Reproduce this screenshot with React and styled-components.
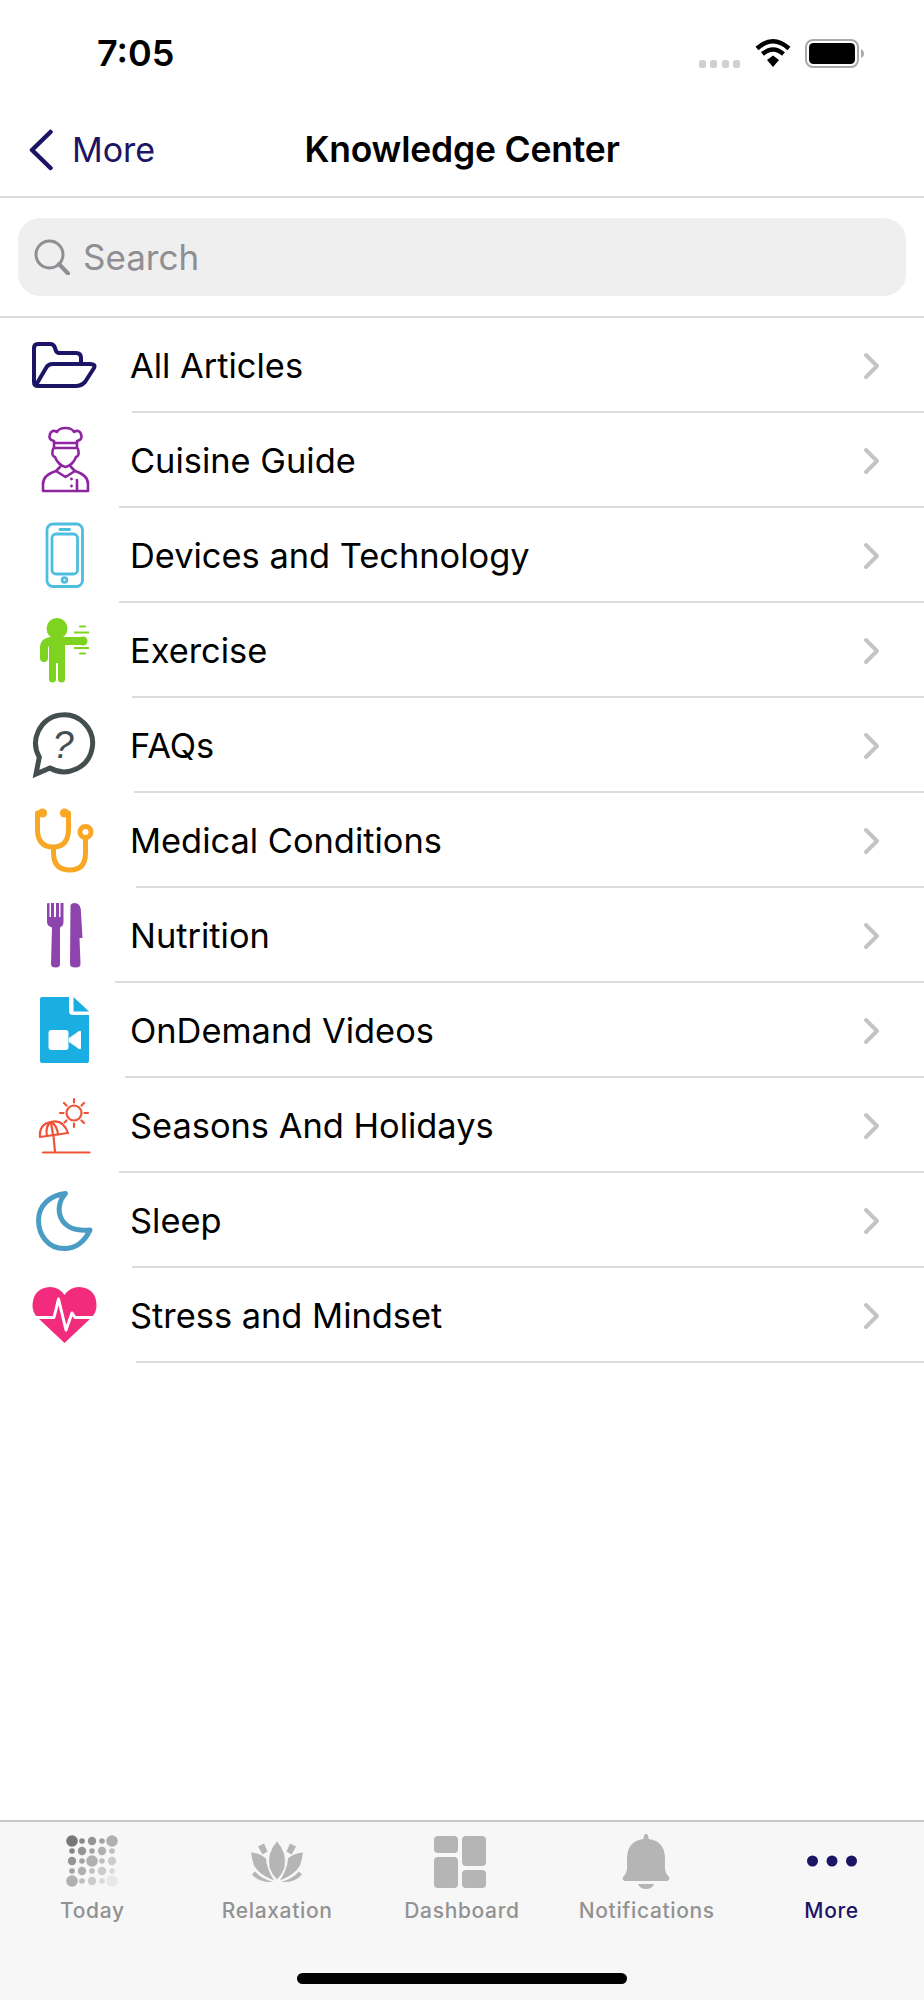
import React from "react";
import styled, { createGlobalStyle } from "styled-components";

const Global = createGlobalStyle`
  html, body { margin: 0; padding: 0; background: #fff; }
  * { box-sizing: border-box; }
  body { font-family: Inter, "Liberation Sans", sans-serif; -webkit-font-smoothing: antialiased; }
`;

const NAVY = "#1c1464";

const Page = styled.div`
  width: 924px;
  height: 2000px;
  display: flex;
  flex-direction: column;
  background: #fff;
`;

const StatusBar = styled.div`
  height: 117px;
  flex: none;
  display: flex;
  justify-content: space-between;
  align-items: flex-start;
  padding: 39px 58px 0 97px;
`;

const Clock = styled.div`
  font-size: 36px;
  line-height: 29px;
  font-weight: 600;
  color: #000;
  letter-spacing: 0;
`;

const StatusIcons = styled.div`
  display: flex;
  align-items: flex-start;
  margin-top: -1px;
`;

const NavBar = styled.div`
  height: 81px;
  flex: none;
  display: grid;
  grid-template-columns: 1fr auto 1fr;
  align-items: center;
  border-bottom: 2px solid #dedede;
  padding-bottom: 14px;
`;

const Back = styled.div`
  display: flex;
  align-items: center;
  gap: 19px;
  padding-left: 28px;
  color: ${NAVY};
  font-size: 34px;
`;

const Title = styled.div`
  font-size: 35.5px;
  font-weight: 600;
  color: #000;
  letter-spacing: -0.2px;
`;

const SearchWrap = styled.div`
  height: 120px;
  flex: none;
  padding: 20px 18px 0;
  border-bottom: 2px solid #dedede;
`;

const SearchBox = styled.div`
  height: 78px;
  background: #efefef;
  border-radius: 22px;
  display: flex;
  align-items: center;
  gap: 13px;
  padding: 0 0 0 16px;
  color: #8e8e93;
  font-size: 35px;
`;

const List = styled.div`
  flex: 1;
  display: flex;
  flex-direction: column;
`;

const Row = styled.div`
  position: relative;
  height: 95px;
  flex: none;
  display: flex;
  align-items: center;
  &::after {
    content: "";
    position: absolute;
    left: ${(p) => p.$sep}px;
    right: 0;
    bottom: 0;
    height: 2px;
    background: #dcdcdc;
  }
`;

const IconCell = styled.svg`
  width: 104px;
  height: 95px;
  flex: none;
  margin-left: 26px;
`;

const RowLabel = styled.div`
  flex: 1;
  font-size: 34.4px;
  color: #000;
`;

const Chevron = styled.svg`
  width: 20px;
  height: 30px;
  margin-right: 42px;
  flex: none;
`;

const TabBar = styled.div`
  height: 180px;
  flex: none;
  background: #f7f7f7;
  border-top: 2px solid #c8c8c8;
  display: flex;
  flex-direction: column;
`;

const Tabs = styled.div`
  display: grid;
  grid-template-columns: repeat(5, 1fr);
`;

const Tab = styled.div`
  display: flex;
  flex-direction: column;
  align-items: center;
  color: ${(p) => (p.$active ? NAVY : "#929292")};
  font-size: 21px;
  line-height: 26px;
  letter-spacing: 0.65px;
  font-weight: 450;
`;

const TabIcon = styled.svg`
  width: 60px;
  height: 60px;
  margin-top: 10px;
  margin-bottom: 6px;
  flex: none;
`;

const HomeIndicator = styled.div`
  width: 330px;
  height: 11px;
  border-radius: 6px;
  background: #000;
  margin: 49px auto 0;
`;

const Icon = ({ children }) => <IconCell viewBox="26 0 104 95">{children}</IconCell>;

const Folder = () => (
  <Icon>
    <path
      d="M34 64V30Q34 26 38 26H50Q54 26 55 30L56 33Q57 35 60 35H76Q81 35 81 40V46M36 67L46 50Q48 46 53 46H90Q96 46 94 50L85 64Q81 68 76 68H38Q34 68 34 64"
      fill="none" stroke={NAVY} strokeWidth="4" strokeLinejoin="round" strokeLinecap="round" />
  </Icon>
);

const Chef = () => (
  <Icon>
    <g fill="none" stroke="#8e24a0" strokeWidth="2.6" strokeLinejoin="round" strokeLinecap="round">
      <path d="M54 35V28Q48 27 50 21Q52 16 57 19Q59 15 65.5 15Q72 15 74 19Q79 16 81 21Q83 27 77 28V35Z" />
      <path d="M55 30H76" />
      <path d="M53 36Q51 43 55 44Q58 52 65.5 54Q73 52 76 44Q80 43 78 36" />
      <path d="M43 78V71Q43 62 56 58L60 54M43 78H88V71Q88 62 75 58L71 54M56 58L65.5 64L75 58" />
      <path d="M77 67V78" />
    </g>
    <circle cx="71.5" cy="66" r="1.4" fill="#8e24a0" />
    <circle cx="71.5" cy="73" r="1.4" fill="#8e24a0" />
  </Icon>
);

const Phone = () => (
  <Icon>
    <g fill="none" stroke="#4dbde0" strokeWidth="2.8">
      <rect x="47" y="16" width="35.5" height="62.5" rx="6" />
      <rect x="52" y="26" width="25.5" height="40" rx="4" />
      <path d="M60 21.5H69.5" strokeLinecap="round" />
      <circle cx="64.5" cy="72" r="2.4" />
    </g>
  </Icon>
);

const Exercise = () => (
  <Icon>
    <circle cx="57" cy="25.5" r="10.5" fill="#7ed321" />
    <g fill="none" stroke="#7ed321" strokeLinecap="round" strokeLinejoin="round">
      <path d="M44 55V45Q44 38.500 52 38H83" strokeWidth="8" />
      <path d="M52.500 40V76M61.500 40V76" strokeWidth="7" />
      <path d="M57 40V60" strokeWidth="10" strokeLinecap="butt" />
      <path d="M74 29.5H89M74 45H89" strokeWidth="2" strokeLinecap="butt" />
      <path d="M80 23.5H85M80 50.500H85" strokeWidth="2" />
    </g>
    <circle cx="83" cy="38" r="4.500" fill="#7ed321" />
  </Icon>
);

const Faq = () => (
  <Icon>
    <path d="M39.300 59.250L36 76L50 70A28.500 28.500 0 1 0 39.300 59.250Z" fill="none" stroke="#434f4f" strokeWidth="5" strokeLinejoin="miter" />
    <text x="63" y="60" fontSize="38" fontStyle="italic" fontFamily="'Liberation Sans', sans-serif" fill="#434f4f" textAnchor="middle">?</text>
  </Icon>
);

const Stethoscope = () => (
  <Icon>
    <g fill="none" stroke="#f9a826" strokeWidth="5">
      <path d="M42 20H37.5V36Q37.5 54 53 54Q68.5 54 68.5 36V20H65" strokeLinejoin="round" />
      <path d="M53.5 54V60Q53.5 77 70 77Q85.5 77 85.5 60V45" />
      <circle cx="85.5" cy="39" r="5.5" />
    </g>
    <circle cx="42.5" cy="20" r="4.6" fill="#f9a826" />
    <circle cx="64.5" cy="20" r="4.6" fill="#f9a826" />
  </Icon>
);

const Cutlery = () => (
  <Icon>
    <path d="M47 15.5Q47 15 49.5 15V29H51V15H54V29H56V15H59V29H60.5V15H63.5V34Q63.5 38 60 39.5L60 76Q60 79.5 55.5 79.5Q51 79.5 51 76L52 39.5Q47 38 47 34Z" fill="#8e44ad" />
    <path d="M70.5 18Q70.5 15 75 15Q81 15 81 25L82.5 50H79.5L80.5 76Q80.5 79.5 75.5 79.5Q70 79.5 70 76Z" fill="#8e44ad" />
  </Icon>
);

const VideoDoc = () => (
  <Icon>
    <path d="M42 14H69V28Q69 32 73 32H89V78Q89 80 87 80H42Q40 80 40 78V16Q40 14 42 14Z" fill="#1aaee3" />
    <path d="M73.5 14L89 28.5H73.5Z" fill="#1aaee3" />
    <rect x="48.5" y="47" width="20" height="20" rx="3" fill="#fff" />
    <path d="M69 55L79 48Q81 47 81 49V65Q81 67 79 66L69 59Z" fill="#fff" />
  </Icon>
);

const Beach = () => (
  <Icon>
    <g fill="none" stroke="#ef5338" strokeWidth="2.2" strokeLinecap="round" strokeLinejoin="round">
      <circle cx="74" cy="35" r="7.5" />
      <path d="M74 21V24.5M74 45.5V49M60 35H63.5M84.5 35H88M64 25L66.5 27.5M81.5 42.5L84 45M84 25L81.5 27.5M66.5 42.5L64.5 44.5" />
      <path d="M40 59Q39 46 51 44Q63 41 68 55Z" />
      <path d="M47 58Q45 48 51 44Q57 47 58 56.5M51 44L53 57" />
      <path d="M53.5 58L55 74M43 74.5H89.5" />
    </g>
  </Icon>
);

const Moon = () => (
  <Icon>
    <path d="M65.500 20.500C54 32 56 60 90 57C84 70 75 75.500 64 75.500C48 75.500 38.500 62 38.500 47C38.500 33 50 22 65.500 20.500Z" fill="none" stroke="#4a9cc5" strokeWidth="5" strokeLinejoin="round" />
  </Icon>
);

const Heart = () => (
  <Icon>
    <path d="M64.500 75L38 50Q32 44 32.500 37Q33.500 20 50 19Q59 19 64.500 27Q70 19 79 19Q96 20 96.500 37Q97 44 91 50Z" fill="#f22b7c" />
    <path d="M32 49.500H50L54 49.500L58.500 31L66 62L72 45L75 49.500H97" fill="none" stroke="#fff" strokeWidth="3" strokeLinejoin="round" />
  </Icon>
);

const rows = [
  { label: "All Articles", sep: 132, Glyph: Folder },
  { label: "Cuisine Guide", sep: 119, Glyph: Chef },
  { label: "Devices and Technology", sep: 119, Glyph: Phone },
  { label: "Exercise", sep: 132, Glyph: Exercise },
  { label: "FAQs", sep: 134, Glyph: Faq },
  { label: "Medical Conditions", sep: 136, Glyph: Stethoscope },
  { label: "Nutrition", sep: 115, Glyph: Cutlery },
  { label: "OnDemand Videos", sep: 125, Glyph: VideoDoc },
  { label: "Seasons And Holidays", sep: 119, Glyph: Beach },
  { label: "Sleep", sep: 132, Glyph: Moon },
  { label: "Stress and Mindset", sep: 136, Glyph: Heart },
];

const dotSizes = [
  [5.8, 2.8, 4.2, 2.8, 5.8],
  [2.8, 4.2, 2.8, 4.2, 2.8],
  [4.2, 2.8, 5.8, 2.8, 4.2],
  [2.8, 4.2, 2.8, 4.2, 2.8],
  [5.8, 2.8, 4.2, 2.8, 5.8],
];

const TodayIcon = () => (
  <TabIcon viewBox="0 0 60 60">
    {dotSizes.flatMap((line, y) =>
      line.map((r, x) => {
        const v = Math.round(120 + ((x + y) / 8) * 112);
        return <circle key={`${x}-${y}`} cx={10 + x * 10} cy={9 + y * 10} r={r} fill={`rgb(${v},${v},${v})`} />;
      })
    )}
  </TabIcon>
);

const LotusIcon = () => (
  <TabIcon viewBox="0 -4.500 60 60">
    <g fill="#b5b5b5">
      <path d="M30 5Q40 16 37.500 31Q35 38 30 43Q25 38 22.500 31Q20 16 30 5Z" />
      <path d="M4 16Q14 17 19 22Q19.500 32 27 44Q12 38 7 29Q5 23 4 16Z" />
      <path d="M56 16Q46 17 41 22Q40.500 32 33 44Q48 38 53 29Q55 23 56 16Z" />
      <path d="M11 10L17 7L20.500 15L15.500 18Z" />
      <path d="M49 10L43 7L39.500 15L44.500 18Z" />
      <path d="M5 38L8 35Q14 42 26 45.500Q12 46.500 5 38Z" />
      <path d="M55 38L52 35Q46 42 34 45.500Q48 46.500 55 38Z" />
    </g>
  </TabIcon>
);

const DashIcon = () => (
  <TabIcon viewBox="2 0 60 60">
    <g fill="#b5b5b5">
      <rect x="4" y="4" width="24" height="17" rx="4" />
      <rect x="4" y="25" width="24" height="31" rx="4" />
      <rect x="32" y="4" width="24" height="30" rx="4" />
      <rect x="32" y="38" width="24" height="18" rx="4" />
    </g>
  </TabIcon>
);

const BellIcon = () => (
  <TabIcon viewBox="1 0 60 60">
    <g fill="#b5b5b5">
      <path d="M27.500 7Q27.500 2 30 2Q32.500 2 32.500 7Q49 9 49 27V36Q49 41 53 45Q54 48.500 51 49H9Q6 48.500 7 45Q11 41 11 36V27Q11 9 27.500 7Z" />
      <path d="M22 52H38Q36 57 30 57Q24 57 22 52Z" />
    </g>
  </TabIcon>
);

const MoreIcon = () => (
  <TabIcon viewBox="0 0 60 60">
    <g fill={NAVY}>
      <circle cx="10.500" cy="29" r="5.500" />
      <circle cx="30" cy="29" r="5.500" />
      <circle cx="49.500" cy="29" r="5.500" />
    </g>
  </TabIcon>
);

const tabs = [
  { label: "Today", Glyph: TodayIcon },
  { label: "Relaxation", Glyph: LotusIcon },
  { label: "Dashboard", Glyph: DashIcon },
  { label: "Notifications", Glyph: BellIcon },
  { label: "More", Glyph: MoreIcon, active: true },
];

export default function App() {
  return (
    <Page>
      <Global />
      <StatusBar>
        <Clock>7:05</Clock>
        <StatusIcons>
          <svg width="168" height="30" viewBox="699 37 168 30">
            <g fill="#d0d0d0">
              <rect x="700" y="59" width="7" height="8" rx="2.500" />
              <rect x="711" y="59" width="7" height="8" rx="2.500" />
              <rect x="723" y="59" width="7" height="8" rx="2.500" />
              <rect x="734" y="59" width="7" height="8" rx="2.500" />
            </g>
            <g fill="none" stroke="#000" strokeWidth="4.500">
              <path d="M758 47.500Q774 33 790 47.500" />
              <path d="M763.500 53Q774 44 784.500 53" />
            </g>
            <path d="M768 59L774 54.500L780 59L774 66Z" fill="#000" />
            <rect x="807" y="39" width="52" height="27" rx="7" fill="none" stroke="#aaa" strokeWidth="2" />
            <rect x="810" y="42" width="46" height="21" rx="4.500" fill="#000" />
            <path d="M862 48V57Q865 55.500 865 52.500Q865 49.500 862 48Z" fill="#aaa" />
          </svg>
        </StatusIcons>
      </StatusBar>
      <NavBar>
        <Back>
          <svg width="25" height="42" viewBox="0 0 25 42">
            <path d="M22.500 3L4 21L22.500 39" fill="none" stroke={NAVY} strokeWidth="4.500" strokeLinecap="round" strokeLinejoin="round" />
          </svg>
          More
        </Back>
        <Title>Knowledge Center</Title>
        <span />
      </NavBar>
      <SearchWrap>
        <SearchBox>
          <svg width="36" height="36" viewBox="0 0 36 36">
            <circle cx="15.500" cy="15.500" r="13.500" fill="none" stroke="#8e8e93" strokeWidth="3" />
            <path d="M25 25L34 34.500" stroke="#8e8e93" strokeWidth="4" strokeLinecap="round" />
          </svg>
          Search
        </SearchBox>
      </SearchWrap>
      <List>
        {rows.map(({ label, sep, Glyph }) => (
          <Row key={label} $sep={sep}>
            <Glyph />
            <RowLabel>{label}</RowLabel>
            <Chevron viewBox="0 0 20 30">
              <path d="M4 4L15 15L4 26" fill="none" stroke="#c4c4c7" strokeWidth="4" strokeLinecap="round" strokeLinejoin="round" />
            </Chevron>
          </Row>
        ))}
      </List>
      <TabBar>
        <Tabs>
          {tabs.map(({ label, Glyph, active }) => (
            <Tab key={label} $active={active}>
              <Glyph />
              {label}
            </Tab>
          ))}
        </Tabs>
        <HomeIndicator />
      </TabBar>
    </Page>
  );
}
